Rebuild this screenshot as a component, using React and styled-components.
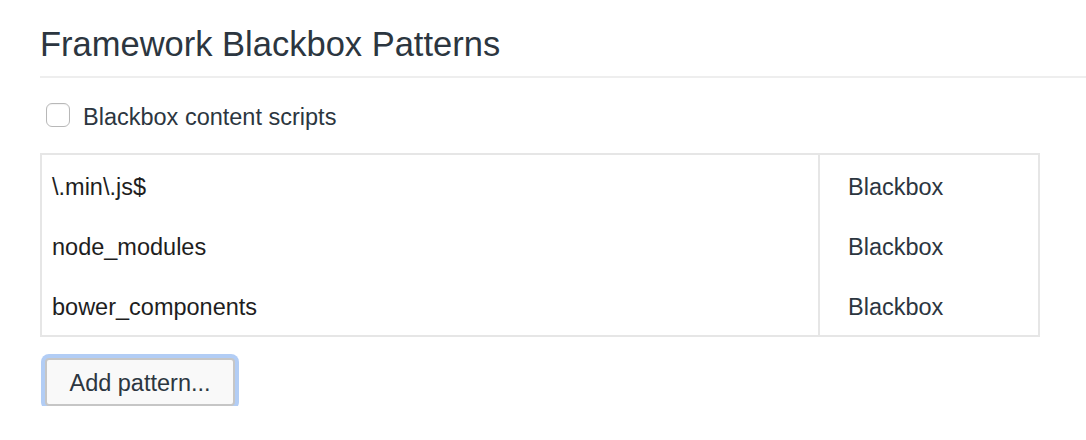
import React from "react";
import styled, { createGlobalStyle } from "styled-components";

const Global = createGlobalStyle`
  html, body { margin: 0; padding: 0; background: #fff; }
  body { font-family: "Liberation Sans", Arial, sans-serif; }
`;

const Page = styled.div`
  padding: 22px 0 0 40px;
`;

const Title = styled.h2`
  margin: 0;
  font-size: 34.5px;
  font-weight: 400;
  color: #2c3640;
  line-height: 44px;
  padding-bottom: 10px;
  border-bottom: 2px solid #eeeeee;
`;

const CheckRow = styled.label`
  display: flex;
  align-items: center;
  gap: 13px;
  margin: 25px 0 26px 6px;
  height: 24px;
  font-size: 23.5px;
  color: #2c3640;
`;

const LabelText = styled.span`
  padding-top: 4px;
`;

const Box = styled.span`
  box-sizing: border-box;
  width: 24px;
  height: 24px;
  border: 1.5px solid #b8b8b8;
  border-radius: 6px;
  background: #fff;
  box-shadow: inset 0 1px 1px rgba(0,0,0,0.05);
`;

const Table = styled.div`
  box-sizing: border-box;
  width: 1000px;
  border: 2px solid #e6e6e6;
  display: grid;
  grid-template-columns: 776px 1fr;
`;

const Cell = styled.div`
  box-sizing: border-box;
  height: 60px;
  display: flex;
  align-items: center;
  padding-top: 4px;
  font-size: 23.5px;
  color: ${(p) => (p.$action ? "#2c3640" : "#1e1e1e")};
  padding-left: ${(p) => (p.$action ? "28px" : "10px")};
  border-left: ${(p) => (p.$action ? "2px solid #e6e6e6" : "none")};
`;

const Button = styled.button`
  display: block;
  margin-top: 21px;
  margin-left: 5px;
  width: 190px;
  height: 48px;
  padding: 2px 0 0;
  font-family: inherit;
  font-size: 23.5px;
  color: #2c3640;
  background: #f9f9f9;
  border: 2px solid #c6c6c6;
  border-radius: 4px;
  box-shadow: 0 0 0 4px #b2cdf5;
  outline: none;
`;

const rows = ["\\.min\\.js$", "node_modules", "bower_components"];

export default function App() {
  return (
    <Page>
      <Global />
      <Title>Framework Blackbox Patterns</Title>
      <CheckRow>
        <Box />
        <LabelText>Blackbox content scripts</LabelText>
      </CheckRow>
      <Table>
        {rows.map((r) => (
          <React.Fragment key={r}>
            <Cell>{r}</Cell>
            <Cell $action>Blackbox</Cell>
          </React.Fragment>
        ))}
      </Table>
      <Button>Add pattern...</Button>
    </Page>
  );
}
